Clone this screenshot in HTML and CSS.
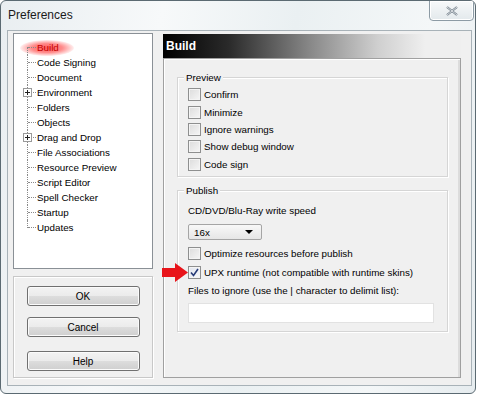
FILE: index.html
```html
<!DOCTYPE html>
<html lang="en">
<head>
<meta charset="UTF-8">
<title>Preferences</title>
<link rel="stylesheet" href="styles.css">
</head>
<body>
  <div class="window">
    <div class="titlebar">
      <span class="title">Preferences</span>
      <div class="close">
        <svg width="12" height="10" viewBox="0 0 12 10">
          <path d="M1 1 L11 9 M11 1 L1 9" stroke="#6d7a85" stroke-width="2.2" fill="none"/>
          <path d="M1 1 L11 9 M11 1 L1 9" stroke="#f4f6f8" stroke-width="0.8" fill="none"/>
        </svg>
      </div>
    </div>

    <div class="client">
      <div class="left-col">
        <div class="tree">
          <div class="glow"></div>
          <div class="tree-item active"><span class="conn"></span><span class="label">Build</span></div>
          <div class="tree-item"><span class="conn"></span><span class="label">Code Signing</span></div>
          <div class="tree-item"><span class="conn"></span><span class="label">Document</span></div>
          <div class="tree-item"><span class="conn"><span class="plus"></span></span><span class="label">Environment</span></div>
          <div class="tree-item"><span class="conn"></span><span class="label">Folders</span></div>
          <div class="tree-item"><span class="conn"></span><span class="label">Objects</span></div>
          <div class="tree-item"><span class="conn"><span class="plus"></span></span><span class="label">Drag and Drop</span></div>
          <div class="tree-item"><span class="conn"></span><span class="label">File Associations</span></div>
          <div class="tree-item"><span class="conn"></span><span class="label">Resource Preview</span></div>
          <div class="tree-item"><span class="conn"></span><span class="label">Script Editor</span></div>
          <div class="tree-item"><span class="conn"></span><span class="label">Spell Checker</span></div>
          <div class="tree-item"><span class="conn"></span><span class="label">Startup</span></div>
          <div class="tree-item last"><span class="conn"></span><span class="label">Updates</span></div>
        </div>
        <div class="button-panel">
          <button class="btn btn-ok">OK</button>
          <button class="btn btn-cancel">Cancel</button>
          <button class="btn btn-help">Help</button>
        </div>
      </div>

      <div class="right-col">
        <div class="header">Build</div>
        <div class="content">
          <div class="group group-preview">
            <span class="group-title">Preview</span>
            <div class="check-row"><span class="check"></span>Confirm</div>
            <div class="check-row"><span class="check"></span>Minimize</div>
            <div class="check-row"><span class="check"></span>Ignore warnings</div>
            <div class="check-row"><span class="check"></span>Show debug window</div>
            <div class="check-row"><span class="check"></span>Code sign</div>
          </div>

          <div class="group group-publish">
            <span class="group-title">Publish</span>
            <div class="field-label">CD/DVD/Blu-Ray write speed</div>
            <div class="select"><span>16x</span><span class="caret"></span></div>
            <div class="check-row tall"><span class="check"></span>Optimize resources before publish</div>
            <div class="check-row tall upx">
              <svg class="arrow" width="26" height="20" viewBox="0 0 26 20">
                <path d="M0 5 H13 V0 L26 9.5 L13 19 V14 H0 Z" fill="#e8141a"/>
              </svg>
              <span class="check checked">
                <svg width="11" height="11" viewBox="0 0 11 11">
                  <path d="M2 5.5 L4.5 8.5 L9 2" stroke="#283c78" stroke-width="1.6" fill="none"/>
                </svg>
              </span>UPX runtime (not compatible with runtime skins)
            </div>
            <div class="field-label">Files to ignore (use the | character to delimit list):</div>
            <div class="textbox"></div>
          </div>
        </div>
      </div>
    </div>
  </div>
</body>
</html>
```

FILE: styles.css
```css
*, *::before, *::after {
  box-sizing: border-box;
}
body {
  margin: 0;
  background: #ffffff;
  font-family: "Liberation Sans", Arial, sans-serif;
  font-size: 9.8px;
  color: #000;
}
.window {
  width: 476px;
  height: 394px;
  border: 1px solid #5b6a72;
  border-radius: 6px;
  background: linear-gradient(100deg, #e9eef1 0%, #f7f9fa 30%, #eaf0f2 55%, #f4f7f8 80%, #e6ecef 100%);
  display: flex;
  flex-direction: column;
  position: relative;
  overflow: hidden;
}
.titlebar {
  height: 29px;
  flex: none;
  display: flex;
  align-items: center;
  padding-left: 7px;
}
.title {
  font-size: 12px;
  color: #1a1a1a;
  margin-top: -1px;
}
.close {
  position: absolute;
  top: -1px;
  right: 1px;
  width: 45px;
  height: 21px;
  border: 1px solid #8d9ba5;
  border-radius: 0 0 4px 4px;
  background: linear-gradient(#f7f9fa, #e3e9ec);
  display: flex;
  align-items: center;
  justify-content: center;
  box-shadow: inset 0 0 0 1px #ffffff;
}
.client {
  margin: 0 3px 7px 6px;
  flex: 1;
  min-width: 0;
  background: #f0f0f0;
  border: 1px solid #a8b2b8;
  display: flex;
  gap: 10px;
  padding: 2px 10px 7px 5px;
}
.left-col {
  width: 140px;
  flex: none;
  display: flex;
  flex-direction: column;
  gap: 7px;
}
.tree {
  height: 236px;
  flex: none;
  background: #ffffff;
  border: 1px solid #8a9096;
  padding-top: 6px;
  position: relative;
}
.glow {
  position: absolute;
  left: 6px;
  top: 6px;
  width: 54px;
  height: 16px;
  border-radius: 50%;
  background: radial-gradient(ellipse at center, rgba(255, 60, 60, 0.85) 0%, rgba(255, 90, 90, 0.7) 40%, rgba(255, 140, 140, 0) 75%);
}
.tree-item {
  height: 15px;
  display: flex;
  align-items: center;
  padding-left: 13px;
  position: relative;
}
.conn {
  width: 8px;
  height: 15px;
  border-left: 1px dotted #8a8a8a;
  position: relative;
  margin-right: 2px;
}
.tree-item.active .conn {
  height: 8px;
  margin-top: 7px;
}
.tree-item.last .conn {
  height: 8px;
  margin-bottom: 7px;
}
.conn::before {
  content: "";
  position: absolute;
  left: 0;
  width: 8px;
  top: 7px;
  border-top: 1px dotted #8a8a8a;
}
.tree-item.active .conn::before {
  top: 0;
}
.plus {
  position: absolute;
  left: -5px;
  top: 3px;
  width: 9px;
  height: 9px;
  border: 1px solid #9a9a9a;
  background: #fff;
  z-index: 1;
}
.plus::before,
.plus::after {
  content: "";
  position: absolute;
  background: #222;
}
.plus::before {
  left: 1px;
  top: 3px;
  width: 5px;
  height: 1px;
}
.plus::after {
  left: 3px;
  top: 1px;
  width: 1px;
  height: 5px;
}
.label {
  position: relative;
  z-index: 1;
  white-space: nowrap;
}
.tree-item.active .label {
  color: #c40000;
}
.button-panel {
  flex: 1;
  border: 1px solid #c8c8c8;
  box-shadow: inset 1px 1px 0 #ffffff, 1px 1px 0 #ffffff;
  display: flex;
  flex-direction: column;
  align-items: center;
  padding-top: 9px;
}
.btn {
  width: 113px;
  height: 20px;
  flex: none;
  border: 1px solid #707070;
  border-radius: 3px;
  background: linear-gradient(#f3f3f3 0%, #ebebeb 50%, #dddddd 51%, #cfcfcf 100%);
  box-shadow: inset 0 0 0 1px #fbfbfb;
  font-family: "Liberation Sans", Arial, sans-serif;
  font-size: 10px;
  color: #000;
  padding: 0;
}
.btn-cancel {
  margin-top: 11px;
}
.btn-help {
  margin-top: 14px;
}
.right-col {
  flex: 1;
  min-width: 0;
  display: flex;
  flex-direction: column;
}
.header {
  height: 24px;
  flex: none;
  margin-top: 1px;
  background: linear-gradient(90deg, #000000 0%, #2a2a2a 22%, #8a8a8a 50%, #cfcfcf 72%, #efefef 88%);
  color: #ffffff;
  font-weight: bold;
  font-size: 12px;
  display: flex;
  align-items: center;
  padding-left: 3px;
}
.content {
  flex: 1;
  border: 1px solid #a0a0a0;
  box-shadow: inset 1px 1px 0 #ffffff, inset -2px 0 0 #dcdcdc;
  padding: 18px 12px 0 13px;
  display: flex;
  flex-direction: column;
}
.group {
  border: 1px solid #d5d5d5;
  box-shadow: inset 1px 1px 0 #ffffff, 1px 1px 0 #ffffff;
  position: relative;
  padding-left: 10px;
  flex: none;
}
.group-title {
  position: absolute;
  top: -7px;
  left: 6px;
  padding: 0 2px;
  background: #f0f0f0;
  line-height: 13px;
}
.group-preview {
  height: 100px;
  padding-top: 8px;
}
.group-publish {
  margin-top: 13px;
  height: 142px;
  padding-top: 11px;
}
.check-row {
  height: 17.4px;
  display: flex;
  align-items: center;
  white-space: nowrap;
  position: relative;
}
.check-row.tall {
  height: 19px;
}
.check {
  width: 13px;
  height: 13px;
  border: 1px solid #8e8f8f;
  background: linear-gradient(135deg, #dcdcdc, #f6f6f6);
  box-shadow: inset 0 0 0 1px #f4f4f4;
  margin-right: 3px;
  flex: none;
  display: flex;
  align-items: center;
  justify-content: center;
}
.check.checked {
  background: linear-gradient(135deg, #e0e4ee, #f8f9fb);
}
.field-label {
  height: 17px;
  display: flex;
  align-items: center;
  white-space: nowrap;
}
.select {
  width: 74px;
  height: 16px;
  margin: 5px 0 4px;
  border: 1px solid #a5a5a5;
  border-radius: 2px;
  background: linear-gradient(#f8f8f8, #e6e6e6);
  display: flex;
  align-items: center;
  justify-content: space-between;
  padding: 0 8px 0 5px;
}
.caret {
  width: 0;
  height: 0;
  border-left: 4px solid transparent;
  border-right: 4px solid transparent;
  border-top: 4px solid #000;
}
.upx .arrow {
  position: absolute;
  left: -26px;
  top: 0;
}
.textbox {
  width: 246px;
  height: 20px;
  margin-top: 4px;
  background: #ffffff;
  border: 1px solid #e2e2e2;
}
```
